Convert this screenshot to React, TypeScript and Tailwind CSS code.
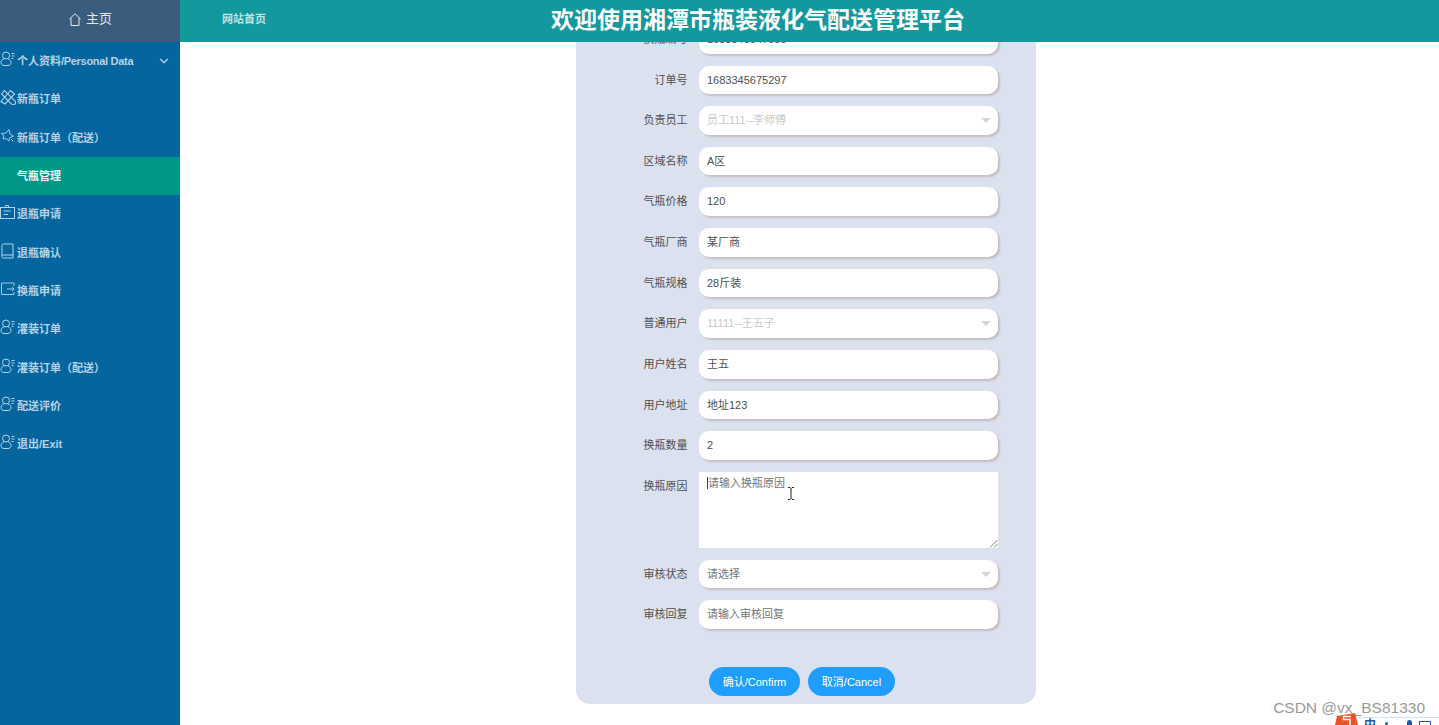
import React from "react";
import { ChevronDown } from "lucide-react";

const cjk = "font-['Liberation_Sans','Noto_Sans_CJK_SC',sans-serif]";

const UserListIcon = () => (
  <svg width="16" height="16" viewBox="0 0 16 16" fill="none" stroke="currentColor" strokeWidth="1">
    <circle cx="6" cy="4.500" r="3.500" />
    <path d="M4 7.800C2 8.500 1 9.800 1 11.300 1 13.300 2.300 14.500 4 14.500h4c1.700 0 3-1.200 3-3.200 0-1.500-1-2.800-3-3.500" />
    <path d="M11.500 2.500h3M11.500 5h3M11.500 7.500h2" />
  </svg>
);
const PenIcon = () => (
  <svg width="16" height="16" viewBox="0 0 16 16" fill="none" stroke="currentColor" strokeWidth="1.100">
    <path d="M1 12.500 10.500 1.500l4 3.500-9.500 10z" />
    <path d="M1.500 5 4.500 1.500 15 12a2 2 0 0 1-3.500 3z" />
  </svg>
);
const StarIcon = () => (
  <svg width="16" height="16" viewBox="0 0 16 16" fill="none" stroke="currentColor" strokeWidth="0.900">
    <path d="M1.500 5.500 6 5l3-3.500 1 4.500 3.500 2-4 2-.5 3-3-2.500-3 .5 1-3z" />
    <path d="m11 11 2.500 2.500" />
  </svg>
);
const ClipIcon = () => (
  <svg width="16" height="16" viewBox="0 0 16 16" fill="none" stroke="currentColor" strokeWidth="1">
    <rect x="0.500" y="3.500" width="14" height="11" />
    <path d="M5.500 3.500V1.500h3v2M3.500 7h7M3.500 10.500h4.500" />
  </svg>
);
const BookIcon = () => (
  <svg width="16" height="16" viewBox="0 0 16 16" fill="none" stroke="currentColor" strokeWidth="1">
    <path d="M2 13V2.500A1.500 1.500 0 0 1 3.500 1H13v14H3.500A1.500 1.500 0 0 1 2 13.500 1.500 1.500 0 0 1 3.500 12H13" />
  </svg>
);
const ExitIcon = () => (
  <svg width="16" height="16" viewBox="0 0 16 16" fill="none" stroke="currentColor" strokeWidth="0.900">
    <path d="M14 5V2H1.500v11.500H14V11" />
    <path d="M7 8h7M12 6l2 2-2 2" />
  </svg>
);

const menu: { t: React.ReactNode; k: string; i: React.ReactNode; arrow?: boolean; active?: boolean }[] = [
  { k: "a", t: <>个人资料<span className="tracking-[-0.300px]">/Personal Data</span></>, i: <UserListIcon />, arrow: true },
  { k: "b", t: "新瓶订单", i: <PenIcon /> },
  { k: "c", t: "新瓶订单（配送）", i: <StarIcon /> },
  { k: "d", t: "气瓶管理", i: null, active: true },
  { k: "e", t: "退瓶申请", i: <ClipIcon /> },
  { k: "f", t: "退瓶确认", i: <BookIcon /> },
  { k: "g", t: "换瓶申请", i: <ExitIcon /> },
  { k: "h", t: "灌装订单", i: <UserListIcon /> },
  { k: "i", t: "灌装订单（配送）", i: <UserListIcon /> },
  { k: "j", t: "配送评价", i: <UserListIcon /> },
  { k: "l", t: "退出/Exit", i: <UserListIcon /> },
];

const rows: { label: string; value: string; kind?: "select"; tone?: string }[] = [
  { label: "换瓶编号", value: "1683345647555" },
  { label: "订单号", value: "1683345675297" },
  { label: "负责员工", value: "员工111--李师傅", kind: "select", tone: "text-[#c8c9cc]" },
  { label: "区域名称", value: "A区" },
  { label: "气瓶价格", value: "120" },
  { label: "气瓶厂商", value: "某厂商" },
  { label: "气瓶规格", value: "28斤装" },
  { label: "普通用户", value: "11111--王五子", kind: "select", tone: "text-[#c8c9cc]" },
  { label: "用户姓名", value: "王五" },
  { label: "用户地址", value: "地址123" },
  { label: "换瓶数量", value: "2" },
];

const Label = ({ children }: { children: React.ReactNode }) => (
  <div className="h-[28px] w-[111.500px] shrink-0 text-right text-[11px] leading-[28px] text-[#505050]">{children}</div>
);

const Field = ({ label, value, kind, tone = "text-[#505050]" }: { label: string; value: string; kind?: "select"; tone?: string }) => (
  <div className="mb-3 flex">
    <Label>{label}</Label>
    <div className="ml-[11.500px] flex h-[28.640px] w-[299px] items-center justify-between rounded-[10px] bg-white pl-2 pr-[7px] shadow-[2px_2px_2px_#c4bfc2]">
      <span className={`text-[11px] ${tone}`}>{value}</span>
      {kind === "select" && <span className="h-0 w-0 border-x-[5px] border-t-[5px] border-x-transparent border-t-[#d4d6da]" />}
    </div>
  </div>
);

export default function App() {
  return (
    <div className={`relative flex h-screen w-full overflow-hidden bg-white ${cjk}`}>
      <aside className="flex w-[180px] shrink-0 flex-col bg-[#05669f]">
        <div className="flex h-[42px] items-center justify-center gap-[5px] bg-[#3a5c7d] pb-[4px] pl-[1px] text-[13px] text-[#e4e9ee]">
          <svg width="12" height="13" viewBox="0 0 12 13" fill="none" stroke="currentColor" strokeWidth="1">
            <path d="M.5 6 6 .8 11.500 6M2 5v7.500h8V5" />
          </svg>
          <span>主页</span>
        </div>
        <nav className="flex flex-col">
          {menu.map((m) => (
            <div
              key={m.k}
              className={`flex h-[38.330px] items-center text-[11px] font-bold ${m.active ? "bg-[#009688] text-[#f2f7f7]" : "text-[#b6d2e6]"}`}
            >
              <span className="-mt-[4px] flex w-[17px] shrink-0 justify-start">{m.i}</span>
              <span>{m.t}</span>
              {m.arrow && <ChevronDown size={14} className="ml-auto mr-[9px]" />}
            </div>
          ))}
        </nav>
      </aside>

      <div className="flex min-w-0 flex-1 flex-col">
        <header className="relative z-10 flex h-[42px] shrink-0 items-center bg-[#13999d]">
          <span className="ml-[42px] pb-[3px] text-[11px] font-bold text-[#bfe3e4]">网站首页</span>
          <h1 className="ml-[285px] pb-[2px] text-[23px] font-bold text-white">欢迎使用湘潭市瓶装液化气配送管理平台</h1>
        </header>
        <main className="flex min-h-0 flex-1 flex-col items-center justify-end overflow-hidden pb-[21px] pr-[7px]">
          <form className="w-[460px] shrink-0 rounded-[14px] bg-[#dce1f0] pb-[8px]">
            {rows.map((r) => (
              <Field key={r.label} {...r} />
            ))}
            <div className="mb-3 flex">
              <Label>换瓶原因</Label>
              <div className="relative ml-[11.500px] h-[76px] w-[299px] bg-white pl-2 pt-[3px] text-[11px] text-[#757575]">
                <span className="border-l border-[#444]">请输入换瓶原因</span>
                <svg className="absolute bottom-0 right-0" width="10" height="10" viewBox="0 0 10 10" stroke="#666" strokeWidth="0.800">
                  <path d="M2 9.500 9.500 2M6 9.500 9.500 6" />
                </svg>
              </div>
            </div>
            <Field label="审核状态" value="请选择" kind="select" tone="text-[#757575]" />
            <Field label="审核回复" value="请输入审核回复" tone="text-[#757575]" />
            <div className="mt-[38px] flex justify-start gap-2 pl-[133px]">
              <button type="button" className="h-[29px] w-[91px] rounded-full bg-[#1e9fff] pt-[2px] text-[11px] text-white">确认/Confirm</button>
              <button type="button" className="h-[29px] w-[87px] rounded-full bg-[#1e9fff] pt-[2px] text-[11px] text-white">取消/Cancel</button>
            </div>
          </form>
        </main>
      </div>

      <svg className="absolute left-[787px] top-[487px]" width="8" height="13" viewBox="0 0 8 13" fill="none" stroke="#222" strokeWidth="1">
        <path d="M1 .5h2l1 1 1-1h2M4 1.500v10M1 12.500h2l1-1 1 1h2" />
      </svg>

      <div className="absolute bottom-[6px] right-[14px] text-[15.500px] text-[#9a9a9a]">CSDN @vx_BS81330</div>

      <div className="absolute bottom-0 right-0 flex h-[8px] w-[81px] items-start overflow-hidden border-t border-[#cfe0f2] bg-white pl-[6px] pt-[1px] text-[#2458a8]">
        <span className="text-[12px] font-bold leading-[12px]">中</span>
        <span className="ml-[9px] mt-[3px] h-[3px] w-[3px] rounded-full bg-current" />
        <span className="ml-[19px] mt-[1px] h-[6px] w-[5px] rounded-t-full bg-current" />
        <span className="ml-[7px] mt-[2px] h-[6px] w-[12px] border border-current" />
      </div>
      <svg className="absolute bottom-0 right-[81px]" width="23" height="12" viewBox="0 0 23 12">
        <path d="M2 3 20 0l3 12H0z" fill="#e8542a" />
        <path d="M16 3.500H8.500v3H15V12" fill="none" stroke="#fff" strokeWidth="1.500" />
      </svg>
    </div>
  );
}
